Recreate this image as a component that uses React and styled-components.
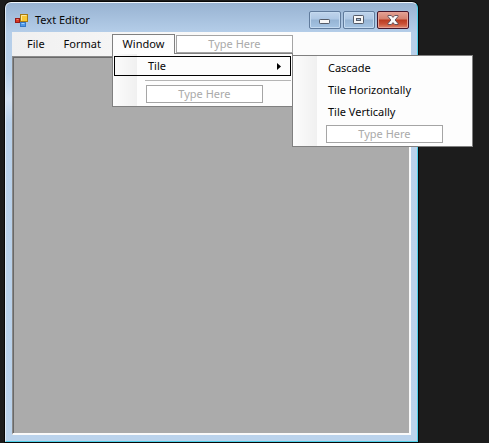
import React from "react";
import styled, { createGlobalStyle } from "styled-components";

const GlobalStyle = createGlobalStyle`
  * { box-sizing: border-box; }
  body {
    margin: 0;
    background: #1c1c1c;
    color: #080808;
    font: 11px/16px "Noto Sans", "Open Sans", sans-serif;
  }
  button, input { font: inherit; color: inherit; }
`;

const Desktop = styled.main`
  display: flex;
  min-height: 100vh;
  padding: 2px 71px 1px 5px;
`;

const WindowFrame = styled.section`
  flex: 1;
  min-width: 0;
  display: flex;
  flex-direction: column;
  padding: 0 6px 6px;
  border: 1px solid #dfeaf6;
  border-top-color: #eef5fc;
  border-right-color: #4fd0e8;
  border-bottom-color: #4fd0e8;
  border-radius: 6px 6px 0 0;
  background: linear-gradient(#98b3d2 0, #b5cee9 30px, #b9d1ea 70px, #d3e2f3 96px, #b9d1ea 120px, #bbd3ec 100%);
  box-shadow: 0 0 0 1px #080808;
`;

const TitleBar = styled.header`
  display: flex;
  align-items: center;
  height: 29px;
  padding: 5px 2px 0 3px;
  gap: 7px;
`;

const Title = styled.h1`
  flex: 1;
  margin: 0;
  font-size: 11px;
  font-weight: 400;
`;

const Controls = styled.div`
  display: flex;
  gap: 2px;
`;

const ControlButton = styled.button`
  display: grid;
  place-items: center;
  width: 32px;
  height: 18px;
  padding: 0;
  border: 1px solid ${(p) => (p.$danger ? "#45162a" : "#607b9c")};
  border-radius: 2px;
  background: ${(p) =>
    p.$danger
      ? "linear-gradient(#e3a295 0, #d4816f 7px, #b93b21 8px, #ca5137 12px, #dd8a70 100%)"
      : "linear-gradient(#c0d4eb 0, #aec8e5 7px, #96b4d4 8px, #a5c4e3 100%)"};
  box-shadow: inset 0 0 0 1px ${(p) => (p.$danger ? "#e6a195" : "#c4daf0")};
`;

const Client = styled.div`
  flex: 1;
  display: flex;
  flex-direction: column;
`;

const MenuBar = styled.nav`
  display: flex;
  height: 24px;
  padding: 2px 0 2px 6px;
  background: linear-gradient(90deg, #f0f0f0 0, #fcfcfc 240px);
`;

const MenuButton = styled.button`
  height: 20px;
  margin-right: 1px;
  padding: 0 9px 1px;
  border: 0;
  background: transparent;
`;

const MenuAnchor = styled.div`
  position: relative;
  width: 64px;
  margin-left: 1px;
  z-index: 1;
`;

const OpenMenuButton = styled.button`
  position: relative;
  z-index: 2;
  width: 63px;
  height: 20px;
  padding: 0 0 1px;
  border: 1px solid #808080;
  border-bottom: 0;
  background: linear-gradient(#fcfcfc, #fdfdfd);
`;

const Popup = styled.div`
  position: absolute;
  top: ${(p) => (p.$nested ? "-1px" : "19px")};
  left: ${(p) => (p.$nested ? "calc(100% + 1px)" : "0")};
  width: 181px;
  padding: ${(p) => (p.$nested ? "1px" : "2px 1px 3px")};
  border: 1px solid #808080;
  background: linear-gradient(90deg, #fcfcfc 0, #f0f0f0 24px, #fdfdfd 24px);
`;

const PopupItem = styled.button`
  display: flex;
  align-items: center;
  justify-content: space-between;
  width: 100%;
  height: ${(p) => (p.$selected ? "20px" : "22px")};
  padding: 0 9px 0 ${(p) => (p.$selected ? "33px" : "34px")};
  border: ${(p) => (p.$selected ? "1px solid #000" : "0")};
  background: transparent;
  text-align: left;
`;

const ItemAnchor = styled.div`
  position: relative;
`;

const Separator = styled.hr`
  height: 1px;
  margin: 4px 0 4px 31px;
  border: 0;
  background: #b5b5b5;
`;

const TypeBox = styled.input`
  display: block;
  width: 117px;
  height: 18px;
  margin: ${(p) => (p.$inMenu ? "0 0 0 32px" : "1px 0 0")};
  padding: 0 0 1px;
  border: 1px solid #a5a5a5;
  border-radius: 0;
  background: #fff;
  text-align: center;
  &::placeholder { color: #aaa; opacity: 1; }
`;

const NestedEntry = styled.div`
  padding: 2px 0;
`;

const Workspace = styled.div`
  flex: 1;
  border: 1px solid #8a8a8a;
  border-right: 2px solid #fafafa;
  border-bottom: 2px solid #fafafa;
  background: #ababab;
  box-shadow: inset 1px 1px 0 #696969;
`;

const AppIcon = () => (
  <svg width="13" height="13" viewBox="0 0 13 13" aria-hidden="true">
    <rect x="5.5" y=".5" width="7" height="7" fill="#f9c834" stroke="#a77a11" />
    <path d="M6.5 6.5v-5h5" fill="none" stroke="#ffe79a" />
    <rect x=".5" y="4.5" width="4" height="4" fill="#d93722" stroke="#951b19" />
    <path d="M1.5 5.5h2" stroke="#ef8771" />
    <rect x="5.5" y="8.5" width="5" height="4" fill="#4f98e8" stroke="#3678c6" />
    <path d="M6.5 9.5h3" stroke="#9bd0ff" />
  </svg>
);

const MinimizeIcon = () => (
  <svg width="12" height="10" viewBox="0 0 12 10" aria-hidden="true">
    <rect x=".5" y="4.5" width="10" height="4" rx=".7" fill="#f7f7f7" stroke="#545b68" />
  </svg>
);

const MaximizeIcon = () => (
  <svg width="12" height="10" viewBox="0 0 12 10" aria-hidden="true">
    <rect x=".5" y=".5" width="10" height="8" rx=".7" fill="#f7f7f7" stroke="#545b68" />
    <rect x="3.5" y="3.5" width="4" height="2" fill="#a7bfd8" stroke="#545b68" />
  </svg>
);

const CloseIcon = () => (
  <svg width="12" height="10" viewBox="0 0 12 10" aria-hidden="true">
    <path
      d="M1 .5h3.3L6 2.4 7.7.5H11v1L8.1 5 11 8.5v1H7.7L6 7.6 4.3 9.5H1v-1L3.9 5 1 1.5z"
      fill="#fafafa"
      stroke="#5b4b55"
      strokeWidth=".9"
    />
  </svg>
);

const Arrow = () => (
  <svg width="4" height="7" viewBox="0 0 4 7" aria-hidden="true">
    <path d="M0 0v7l4-3.5z" fill="#000" />
  </svg>
);

const tileItems = ["Cascade", "Tile Horizontally", "Tile Vertically"];

export default function App() {
  return (
    <>
      <GlobalStyle />
      <Desktop>
        <WindowFrame>
          <TitleBar>
            <AppIcon />
            <Title>Text Editor</Title>
            <Controls>
              <ControlButton aria-label="Minimize"><MinimizeIcon /></ControlButton>
              <ControlButton aria-label="Maximize"><MaximizeIcon /></ControlButton>
              <ControlButton $danger aria-label="Close"><CloseIcon /></ControlButton>
            </Controls>
          </TitleBar>
          <Client>
            <MenuBar>
              <MenuButton>File</MenuButton>
              <MenuButton>Format</MenuButton>
              <MenuAnchor>
                <OpenMenuButton aria-expanded="true">Window</OpenMenuButton>
                <Popup>
                  <ItemAnchor>
                    <PopupItem $selected aria-expanded="true">Tile<Arrow /></PopupItem>
                    <Popup $nested>
                      {tileItems.map((name) => (
                        <PopupItem key={name}>{name}</PopupItem>
                      ))}
                      <NestedEntry>
                        <TypeBox $inMenu placeholder="Type Here" aria-label="New tile item" />
                      </NestedEntry>
                    </Popup>
                  </ItemAnchor>
                  <Separator />
                  <TypeBox $inMenu placeholder="Type Here" aria-label="New window item" />
                </Popup>
              </MenuAnchor>
              <TypeBox placeholder="Type Here" aria-label="New menu" />
            </MenuBar>
            <Workspace />
          </Client>
        </WindowFrame>
      </Desktop>
    </>
  );
}
